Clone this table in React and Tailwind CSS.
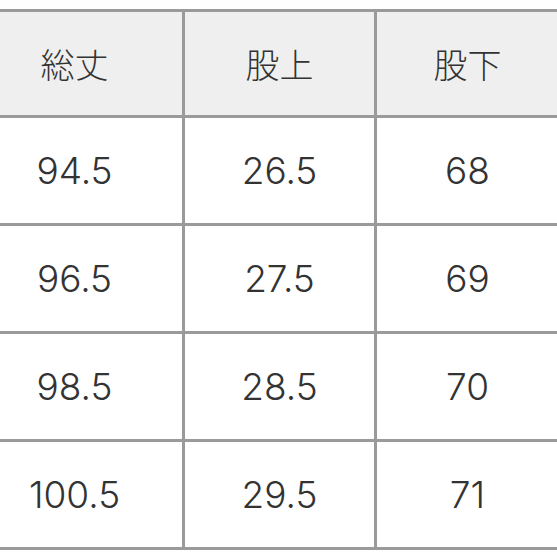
const HEADERS = ['総丈', '股上', '股下'];

const ROWS = [
  ['94.5', '26.5', '68'],
  ['96.5', '27.5', '69'],
  ['98.5', '28.5', '70'],
  ['100.5', '29.5', '71'],
];

export default function App() {
  return (
    <div className="w-[557px] h-[557px] overflow-hidden bg-white pt-[9px]">
      <div className="ml-[-33px] grid w-[591px] grid-cols-[215px_189px_181px] gap-[3px] bg-[#9a9a9a] py-[3px]">
        {HEADERS.map((h) => (
          <div
            key={h}
            className="flex h-[103px] items-center justify-center bg-[#efefef] text-[34px] font-light text-[#333333]"
            style={{ fontFamily: '"Noto Sans CJK JP", sans-serif' }}
          >
            {h}
          </div>
        ))}
        {ROWS.map((row, i) =>
          row.map((cell, j) => (
            <div
              key={`${i}-${j}`}
              className="flex h-[105px] items-center justify-center bg-white text-[37px] font-light text-[#333333]"
              style={{ fontFamily: 'Inter, "Liberation Sans", sans-serif' }}
            >
              {cell}
            </div>
          ))
        )}
      </div>
    </div>
  );
}
